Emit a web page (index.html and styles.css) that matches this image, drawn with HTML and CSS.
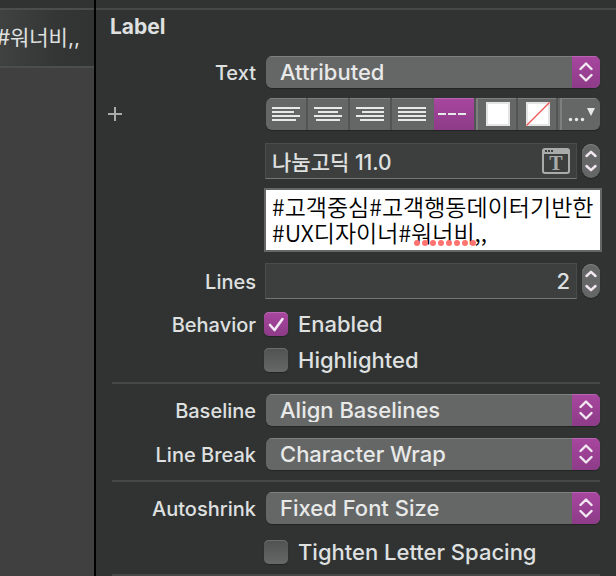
FILE: index.html
```html
<!DOCTYPE html>
<html lang="ko">
<head>
<meta charset="utf-8">
<title>Label inspector</title>
<link rel="stylesheet" href="styles.css">
</head>
<body>
<svg class="sprites">
  <defs>
    <symbol id="updown" viewBox="0 0 14 20"><path d="M1.5 7 7 1.500 12.500 7M1.500 13 7 18.500 12.500 13"/></symbol>
    <symbol id="step" viewBox="0 0 12 22"><path d="M1.500 6 6 1.800 10.500 6M1.500 16 6 20.200 10.500 16"/></symbol>
  </defs>
</svg>
<div class="app">
  <aside class="canvas">
    <div class="canvas-item"><span>#워너비,,</span></div>
  </aside>
  <main class="inspector">
    <h1 class="title">Label</h1>
    <form class="form">
      <div class="row">
        <label class="name" for="text">Text</label>
        <div class="popup">
          <select id="text"><option>Attributed</option></select>
          <span class="cap"><svg class="chev" width="14" height="20"><use href="#updown"/></svg></span>
        </div>
      </div>
      <div class="row row-format">
        <button type="button" class="add" aria-label="Add variation"><svg width="14" height="14"><path d="M6 0h2v6h6v2H8v6H6V8H0V6h6z" fill="#a9aaaa"/></svg></button>
        <div class="segments">
          <button type="button" class="seg" aria-label="Align left"><svg width="28" height="14"><path d="M0 0h28v2H0zM0 4h22v2H0zM0 8h28v2H0zM0 12h24v2H0z"/></svg></button>
          <button type="button" class="seg" aria-label="Align center"><svg width="28" height="14"><path d="M0 0h28v2H0zM4 4h20v2H4zM0 8h28v2H0zM2 12h24v2H2z"/></svg></button>
          <button type="button" class="seg" aria-label="Align right"><svg width="28" height="14"><path d="M0 0h28v2H0zM6 4h22v2H6zM0 8h28v2H0zM4 12h24v2H4z"/></svg></button>
          <button type="button" class="seg" aria-label="Justify"><svg width="28" height="14"><path d="M0 0h28v2H0zM0 4h28v2H0zM0 8h28v2H0zM0 12h28v2H0z"/></svg></button>
          <button type="button" class="seg seg-on" aria-label="Natural alignment" aria-pressed="true"><svg width="32" height="2"><path d="M0 0h8v2H0zM10 0h8v2h-8zM20 0h8v2h-8z"/></svg></button>
          <button type="button" class="seg seg-wide" aria-label="Text color"><span class="swatch"></span></button>
          <button type="button" class="seg seg-narrow" aria-label="Background color"><span class="swatch"><svg width="24" height="24"><path d="M0.500 23.500 23.500 0.500" stroke="#ef5350" stroke-width="1.300"/></svg></span></button>
          <button type="button" class="seg seg-more" aria-label="More"><svg width="28" height="16"><circle cx="2.500" cy="13.500" r="1.700"/><circle cx="8.500" cy="13.500" r="1.700"/><circle cx="14.500" cy="13.500" r="1.700"/><path d="M19 2h8l-4 8z"/></svg></button>
        </div>
      </div>
      <div class="row row-font">
        <div class="field-group">
          <div class="field-box">
            <input class="field" type="text" aria-label="Font" value="나눔고딕 11.0">
            <button type="button" class="font-button" aria-label="Choose font">
              <svg width="28" height="26"><rect x="1" y="1" width="26" height="24" rx="2" fill="none" stroke="#a9abaa" stroke-width="2"/><path d="M1 1h26v5H1z" fill="#a9abaa"/><path d="M3 2h2v2H3zM6 2h2v2H6zM9 2h2v2H9z" fill="#3d3f3e"/><text x="14" y="22" text-anchor="middle" class="font-letter">T</text></svg>
            </button>
          </div>
          <button type="button" class="stepper" aria-label="Font size"><svg class="chev" width="12" height="22"><use href="#step"/></svg></button>
        </div>
      </div>
      <div class="row row-content">
        <div class="editor">
          <textarea aria-label="Label text" rows="2" spellcheck="false">#고객중심#고객행동데이터기반한
#UX디자이너#워너비,,</textarea>
          <svg class="spelling" width="64" height="6"><path d="M3 3H62" stroke="#ff7370" stroke-width="6" stroke-linecap="round" stroke-dasharray="0 8"/></svg>
        </div>
      </div>
      <div class="row row-lines">
        <label class="name" for="lines">Lines</label>
        <div class="field-group">
          <div class="field-box"><input class="field field-number" id="lines" type="text" inputmode="numeric" value="2"></div>
          <button type="button" class="stepper" aria-label="Change lines"><svg class="chev" width="12" height="22"><use href="#step"/></svg></button>
        </div>
      </div>
      <div class="row row-behavior">
        <span class="name">Behavior</span>
        <label class="check"><input type="checkbox" checked><svg class="tick" width="24" height="24"><path d="M6 13 10.500 18 18.500 7"/></svg><span>Enabled</span></label>
      </div>
      <div class="row row-check">
        <label class="check"><input type="checkbox"><span>Highlighted</span></label>
      </div>
      <hr>
      <div class="row">
        <label class="name" for="baseline">Baseline</label>
        <div class="popup">
          <select id="baseline"><option>Align Baselines</option></select>
          <span class="cap"><svg class="chev" width="14" height="20"><use href="#updown"/></svg></span>
        </div>
      </div>
      <div class="row row-check">
        <label class="name" for="break">Line Break</label>
        <div class="popup">
          <select id="break"><option>Character Wrap</option></select>
          <span class="cap"><svg class="chev" width="14" height="20"><use href="#updown"/></svg></span>
        </div>
      </div>
      <hr>
      <div class="row">
        <label class="name" for="shrink">Autoshrink</label>
        <div class="popup">
          <select id="shrink"><option>Fixed Font Size</option></select>
          <span class="cap"><svg class="chev" width="14" height="20"><use href="#updown"/></svg></span>
        </div>
      </div>
      <div class="row row-tighten">
        <label class="check"><input type="checkbox"><span>Tighten Letter Spacing</span></label>
      </div>
      <hr>
    </form>
  </main>
</div>
</body>
</html>
```
FILE: styles.css
```css
* { box-sizing: border-box; }

body {
  margin: 0;
  background: #313332;
  color: #dfe0e0;
  font-family: Inter, "Noto Sans CJK KR", sans-serif;
  font-size: 22px;
  font-weight: 500;
  line-height: 24px;
}

button, input, select, textarea {
  margin: 0;
  padding: 0;
  border: 0;
  background: none;
  color: inherit;
  font: inherit;
}

svg { display: block; }

.sprites { display: none; }

.app {
  display: flex;
  min-height: 100vh;
  overflow: hidden;
}

.canvas {
  flex: 0 0 96px;
  min-width: 0;
  padding-top: 8px;
  border-right: 2px solid #000;
  background: linear-gradient(#313332 8px, #404040 8px);
}

.canvas-item {
  display: flex;
  align-items: center;
  justify-content: flex-end;
  height: 60px;
  padding-right: 14px;
  border-top: 2px solid #4c4e4d;
  border-bottom: 2px solid #4c4e4d;
  background: linear-gradient(90deg, #404241, #343635 60%, #313332);
  font-size: 21px;
  font-weight: 400;
  white-space: nowrap;
  overflow: hidden;
}

.inspector {
  flex: 1;
  min-width: 0;
  margin-top: 8px;
  padding: 0 16px;
  border-top: 2px solid #464847;
}

.title {
  margin: 0 0 12px -2px;
  font-size: 21px;
  font-weight: 700;
  line-height: 34px;
}

.row {
  display: grid;
  grid-template-columns: 144px 1fr;
  column-gap: 8px;
  align-items: center;
}

.row > :last-child { grid-column: 2; }
.row-format { margin-top: 10px; }
.row-font { margin-top: 13px; }
.row-content { margin-top: 9px; }
.row-lines { margin-top: 11px; }
.row-behavior { margin-top: 13px; }
.row-check { margin-top: 12px; }
.row-tighten { margin-top: 16px; }

.name {
  padding-top: 2px;
  font-size: 20px;
  line-height: 22px;
  text-align: right;
}

hr {
  height: 2px;
  margin: 10px 0;
  border: 0;
  background: #464847;
}

hr:last-child { margin-bottom: 0; }

.popup {
  position: relative;
  margin-left: 2px;
  border-radius: 6px;
  overflow: hidden;
  box-shadow: 0 1px 1px #232524;
}

.popup select {
  display: block;
  width: 100%;
  height: 32px;
  padding: 0 36px 0 14px;
  appearance: none;
  background: #656766;
  box-shadow: inset 0 1px #7e807f;
  color: #e8e9e9;
}

.cap {
  position: absolute;
  inset: 0 0 0 auto;
  display: grid;
  place-items: center;
  width: 28px;
  background: linear-gradient(#a8479f, #8d3b88);
  box-shadow: inset 0 1px #b765b0;
  pointer-events: none;
}

.chev {
  fill: none;
  stroke: #f2e8f1;
  stroke-width: 2.4;
  stroke-linecap: round;
  stroke-linejoin: round;
}

.add {
  width: 14px;
  margin-left: -4px;
}

.segments {
  display: flex;
  height: 32px;
  margin-left: 2px;
  border-radius: 6px;
  overflow: hidden;
  background: #656766;
  box-shadow: 0 1px 1px #232524;
}

.seg {
  flex: 0 0 calc(100% * 42 / 334);
  display: grid;
  place-items: center;
  border-right: 2px solid #535554;
  box-shadow: inset 0 1px #7e807f;
  fill: #e8e9e9;
}

.seg:nth-child(4) { border-right-color: #656766; }

.seg-on {
  flex-basis: calc(100% * 40 / 334);
  border-right: 0;
  background: linear-gradient(#a8479f, #8d3b88);
  box-shadow: inset 0 1px #b765b0;
}

.seg-wide {
  flex-basis: calc(100% * 44 / 334);
  border-left: 2px solid #535554;
  box-shadow: inset 2px 1px #7e807f;
  padding-left: 4px;
}

.seg-narrow {
  flex-basis: calc(100% * 40 / 334);
  padding-left: 2px;
}

.seg-more {
  border-right: 0;
  padding-left: 6px;
  box-shadow: inset 2px 0 #656766, inset 4px 1px #7e807f;
}

.swatch {
  width: 24px;
  height: 24px;
  border: 2px solid #e4e4e4;
  background: #fff;
}

.swatch svg { margin: -2px; }

.field-group {
  display: flex;
  align-items: center;
  gap: 5px;
  margin-left: 1px;
}

.field-box {
  position: relative;
  flex: 1;
  min-width: 0;
}

.field {
  display: block;
  width: 100%;
  height: 36px;
  padding: 0 6px;
  border: 1px solid #4a4c4b;
  border-bottom: 1px solid #747675;
  background: #3d3f3e;
  font-size: 21px;
}

.field-number {
  font-size: 22px;
  text-align: right;
}

.font-button {
  position: absolute;
  top: 5px;
  right: 7px;
}

.font-letter {
  fill: #a9abaa;
  font: bold 20px "Liberation Serif", serif;
}

.stepper {
  display: grid;
  place-items: center;
  width: 18px;
  height: 34px;
  border-radius: 9px;
  background: #656766;
  box-shadow: 0 1px 1px #232524, inset 0 1px #7e807f;
}

.editor {
  position: relative;
  margin-right: -2px;
}

.editor textarea {
  display: block;
  width: 100%;
  height: 64px;
  padding: 3px 6px;
  border: 2px solid #656766;
  background: #fff;
  color: #000;
  font-family: "Noto Sans CJK KR", sans-serif;
  font-size: 23px;
  font-weight: 350;
  line-height: 26px;
  white-space: pre;
  resize: none;
  overflow: hidden;
}

.spelling {
  position: absolute;
  left: 150px;
  top: 52px;
}

.check {
  position: relative;
  display: flex;
  align-items: center;
  gap: 10px;
}

.check input {
  width: 24px;
  height: 24px;
  appearance: none;
  border-radius: 5px;
  background: linear-gradient(#505251, #666867);
  box-shadow: 0 1px 1px #232524, inset 0 1px #6c6e6d;
}

.check input:checked {
  background: linear-gradient(#a8479f, #8d3b88);
  box-shadow: 0 1px 1px #232524, inset 0 1px #b765b0;
}

.tick {
  position: absolute;
  left: 0;
  top: 0;
  fill: none;
  stroke: #f4eaf3;
  stroke-width: 2.6;
  stroke-linecap: round;
  stroke-linejoin: round;
}
```
